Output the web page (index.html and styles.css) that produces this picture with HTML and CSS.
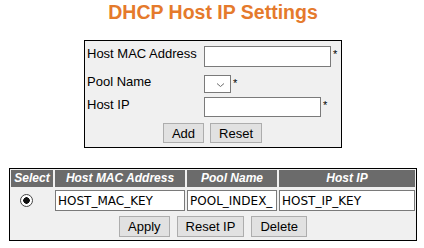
FILE: index.html
```html
<!DOCTYPE html>
<html lang="en">
<head>
    <meta charset="UTF-8">
    <meta name="viewport" content="width=device-width, initial-scale=1.0">
    <title>DHCP Host IP Settings</title>
    <link rel="stylesheet" href="styles.css">
</head>
<body>
    <div class="page">
        <h1 class="page-title">DHCP Host IP Settings</h1>

        <form class="host-form">
            <div class="form-grid">
                <label class="field-label" for="hostMac">Host MAC Address</label>
                <div class="field">
                    <input type="text" id="hostMac" class="text-input mac-input">
                    <span class="req">*</span>
                </div>

                <label class="field-label pool-label" for="poolName">Pool Name</label>
                <div class="field field-select">
                    <span class="select-wrap">
                        <select id="poolName" class="pool-select"></select>
                        <svg class="select-arrow" width="9" height="6" viewBox="0 0 9 6">
                            <path d="M1 1.5 L4.5 4.5 L8 1.5" fill="none" stroke="#6d6d6d" stroke-width="1"/>
                        </svg>
                    </span>
                    <span class="req">*</span>
                </div>

                <label class="field-label" for="hostIp">Host IP</label>
                <div class="field">
                    <input type="text" id="hostIp" class="text-input ip-input">
                    <span class="req">*</span>
                </div>
            </div>
            <div class="btn-row form-btns">
                <button type="button" class="btn">Add</button>
                <button type="reset" class="btn">Reset</button>
            </div>
        </form>

        <div class="host-table">
            <div class="th">Select</div>
            <div class="th">Host MAC Address</div>
            <div class="th">Pool Name</div>
            <div class="th">Host IP</div>

            <div class="td td-radio"><input type="radio" name="sel" class="radio" checked></div>
            <div class="td"><input type="text" class="cell-input" value="HOST_MAC_KEY"></div>
            <div class="td"><input type="text" class="cell-input" value="POOL_INDEX_"></div>
            <div class="td"><input type="text" class="cell-input" value="HOST_IP_KEY"></div>

            <div class="btn-row table-btns">
                <button type="button" class="btn">Apply</button>
                <button type="button" class="btn">Reset IP</button>
                <button type="button" class="btn">Delete</button>
            </div>
        </div>
    </div>
</body>
</html>
```

FILE: styles.css
```css
body {
    margin: 0;
    background-color: #fff;
    font-family: "Liberation Sans", Arial, sans-serif;
    font-size: 13px;
    color: #000;
}

.page {
    display: flex;
    flex-direction: column;
    align-items: center;
    padding: 1px 0 0 2px;
}

.page-title {
    margin: 0 0 16px;
    font-size: 19.5px;
    line-height: 23px;
    font-weight: bold;
    color: #e57a2c;
}

/* add form */
.host-form {
    box-sizing: border-box;
    width: 258px;
    margin: 0;
    padding: 5px 3px 4px 2px;
    border: 1px solid #000;
    background-color: #f0f0f0;
}

.form-grid {
    display: grid;
    grid-template-columns: 117px 1fr;
    row-gap: 4px;
}

.field-label {
    align-self: start;
    line-height: 15px;
}

.pool-label {
    padding-top: 3px;
}

.field {
    display: flex;
    align-items: flex-start;
}

.field-select {
    padding-top: 4px;
}

.text-input {
    box-sizing: border-box;
    margin: 0;
    padding: 0 2px;
    border: 1px solid #7a7a7a;
    background-color: #fff;
    font-family: "DejaVu Sans", sans-serif;
    font-size: 12px;
}

.mac-input {
    width: 127px;
    height: 21px;
}

.ip-input {
    width: 117px;
    height: 20px;
}

.select-wrap {
    position: relative;
    display: block;
    width: 27px;
    height: 18px;
}

.pool-select {
    appearance: none;
    box-sizing: border-box;
    display: block;
    width: 27px;
    height: 18px;
    margin: 0;
    border: 1px solid #7a7a7a;
    border-radius: 0;
    background-color: #fff;
}

.select-arrow {
    position: absolute;
    left: 12px;
    top: 7px;
    pointer-events: none;
}

.req {
    margin-left: 2px;
    font-size: 11px;
    line-height: 12px;
    padding-top: 2px;
}

.btn-row {
    display: flex;
    justify-content: center;
    gap: 6px;
}

.form-btns {
    margin-top: 6px;
}

.btn {
    box-sizing: border-box;
    height: 20px;
    margin: 0;
    padding: 0 8px;
    border: 1px solid #adadad;
    border-radius: 0;
    background-color: #e1e1e1;
    font-family: "Liberation Sans", Arial, sans-serif;
    font-size: 13px;
    color: #000;
}

/* host list */
.host-table {
    box-sizing: border-box;
    width: 408px;
    margin-top: 20px;
    padding: 1px 1px 3px;
    border: 1px solid #000;
    background-color: #f0f0f0;
    display: grid;
    grid-template-columns: 42px 130px 90px 136px;
    column-gap: 2px;
    row-gap: 3px;
}

.th {
    height: 17px;
    line-height: 17px;
    background-color: #6b6b6b;
    color: #fff;
    font-size: 12px;
    font-weight: bold;
    font-style: italic;
    text-align: center;
    white-space: nowrap;
}

.td {
    display: flex;
    align-items: center;
}

.td-radio {
    padding-left: 9px;
}

.radio {
    appearance: none;
    box-sizing: border-box;
    width: 13px;
    height: 13px;
    margin: 0;
    border: 1px solid #444;
    border-radius: 50%;
    background: radial-gradient(circle, #111 0 3px, #fff 3.5px);
}

.cell-input {
    box-sizing: border-box;
    width: 100%;
    height: 21px;
    margin: 0;
    padding: 0 2px;
    border: 1px solid #7a7a7a;
    background-color: #fff;
    font-family: "DejaVu Sans", sans-serif;
    font-size: 12px;
    color: #000;
}

.table-btns {
    grid-column: 1 / -1;
    margin-top: 2px;
    gap: 7px;
}

.table-btns .btn {
    height: 21px;
}
```
